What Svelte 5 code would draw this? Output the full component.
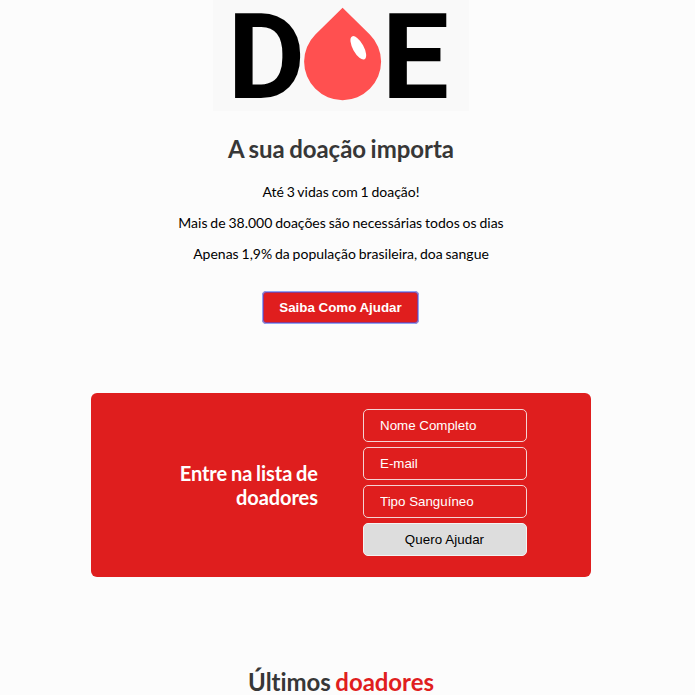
<script>
  const facts = [
    'Até 3 vidas com 1 doação!',
    'Mais de 38.000 doações são necessárias todos os dias',
    'Apenas 1,9% da população brasileira, doa sangue'
  ];
  const fields = ['Nome Completo', 'E-mail', 'Tipo Sanguíneo'];
</script>

<div class="page">
  <header>
    <svg class="logo" width="256" height="111" viewBox="0 0 256 111" role="img" aria-label="Doe">
      <rect width="256" height="111" fill="#f9f9f9" />
      <text x="14.5" y="98">D</text>
      <path d="M129.6 7.7L156.8 34.4A38.5 38.5 0 1 1 102.4 34.4Z" fill="#ff5050" />
      <ellipse cx="145.3" cy="47.8" rx="5.4" ry="13" transform="rotate(-29 145.3 47.8)" fill="#fff" />
      <text x="168.8" y="98">E</text>
    </svg>
    <h1>A sua doação importa</h1>
    {#each facts as fact}
      <p>{fact}</p>
    {/each}
    <button class="help">Saiba Como Ajudar</button>
  </header>

  <section class="form">
    <h2>Entre na lista de doadores</h2>
    <form onsubmit={(event) => event.preventDefault()}>
      {#each fields as field}
        <input type="text" placeholder={field} />
      {/each}
      <button>Quero Ajudar</button>
    </form>
  </section>

  <section class="donors">
    <h2>Últimos <span>doadores</span></h2>
  </section>
</div>

<style>
  :global(body) {
    background: #fcfcfc;
    overflow: hidden;
  }
  .page {
    width: 500px;
    margin-left: 91px;
    font-family: Lato, sans-serif;
    color: #000;
  }
  header {
    display: flex;
    flex-direction: column;
    align-items: center;
    height: 393px;
  }
  .logo {
    display: block;
    flex: none;
    overflow: visible;
  }
  .logo text {
    font: bold 119.5px Roboto, sans-serif;
    fill: #000;
  }
  h1,
  h2 {
    margin: 0;
    font-weight: bold;
    letter-spacing: -0.05px;
    word-spacing: -0.05em;
  }
  h1 {
    margin: 23px 0 19px;
    font-size: 24px;
    line-height: 30px;
    color: #373737;
  }
  p {
    margin: 0;
    font-size: 14px;
    line-height: 17px;
    padding-bottom: 14px;
    word-spacing: -0.75px;
    white-space: nowrap;
  }
  button,
  input {
    box-sizing: border-box;
    height: 33px;
    margin: 0;
    border: 1px solid #ddd;
    border-radius: 5px;
    font: 13.3333px "Liberation Sans", Arial, sans-serif;
  }
  .help {
    width: 157px;
    margin: 15px 1px 0 0;
    padding: 0;
    border: 1px solid #7b4fa8;
    border-radius: 4px;
    outline: 1px solid #8ea4f6;
    outline-offset: -1px;
    background: #e01e1e;
    box-shadow: inset 0 0 0 1px #8a3c90;
    color: #fff;
    font-weight: bold;
  }
  .form {
    display: flex;
    align-items: center;
    box-sizing: border-box;
    height: 184px;
    padding: 16px 64px 21px 86px;
    border-radius: 6px;
    background: #df1e1e;
  }
  .form h2 {
    width: 142px;
    margin-right: 44px;
    padding: 5px 1px 0 0;
    box-sizing: border-box;
    font-size: 20px;
    line-height: 24px;
    text-align: right;
    color: #fff;
  }
  form {
    display: flex;
    flex-direction: column;
    gap: 5px;
    width: 164px;
  }
  input {
    width: 100%;
    padding: 0 16px;
    background: transparent;
    color: #fff;
    border-color: #f4d4d4;
  }
  input::placeholder {
    color: #fff;
    opacity: 1;
  }
  form button {
    padding: 0 1px 0 0;
    border-color: #f4f4f4;
    background: #ddd;
    color: #000;
    letter-spacing: 0.06px;
  }
  .donors {
    padding-top: 90px;
    text-align: center;
  }
  .donors h2 {
    font-size: 24px;
    line-height: 30px;
    color: #373737;
  }
  .donors span {
    color: #e01e1e;
  }
</style>
